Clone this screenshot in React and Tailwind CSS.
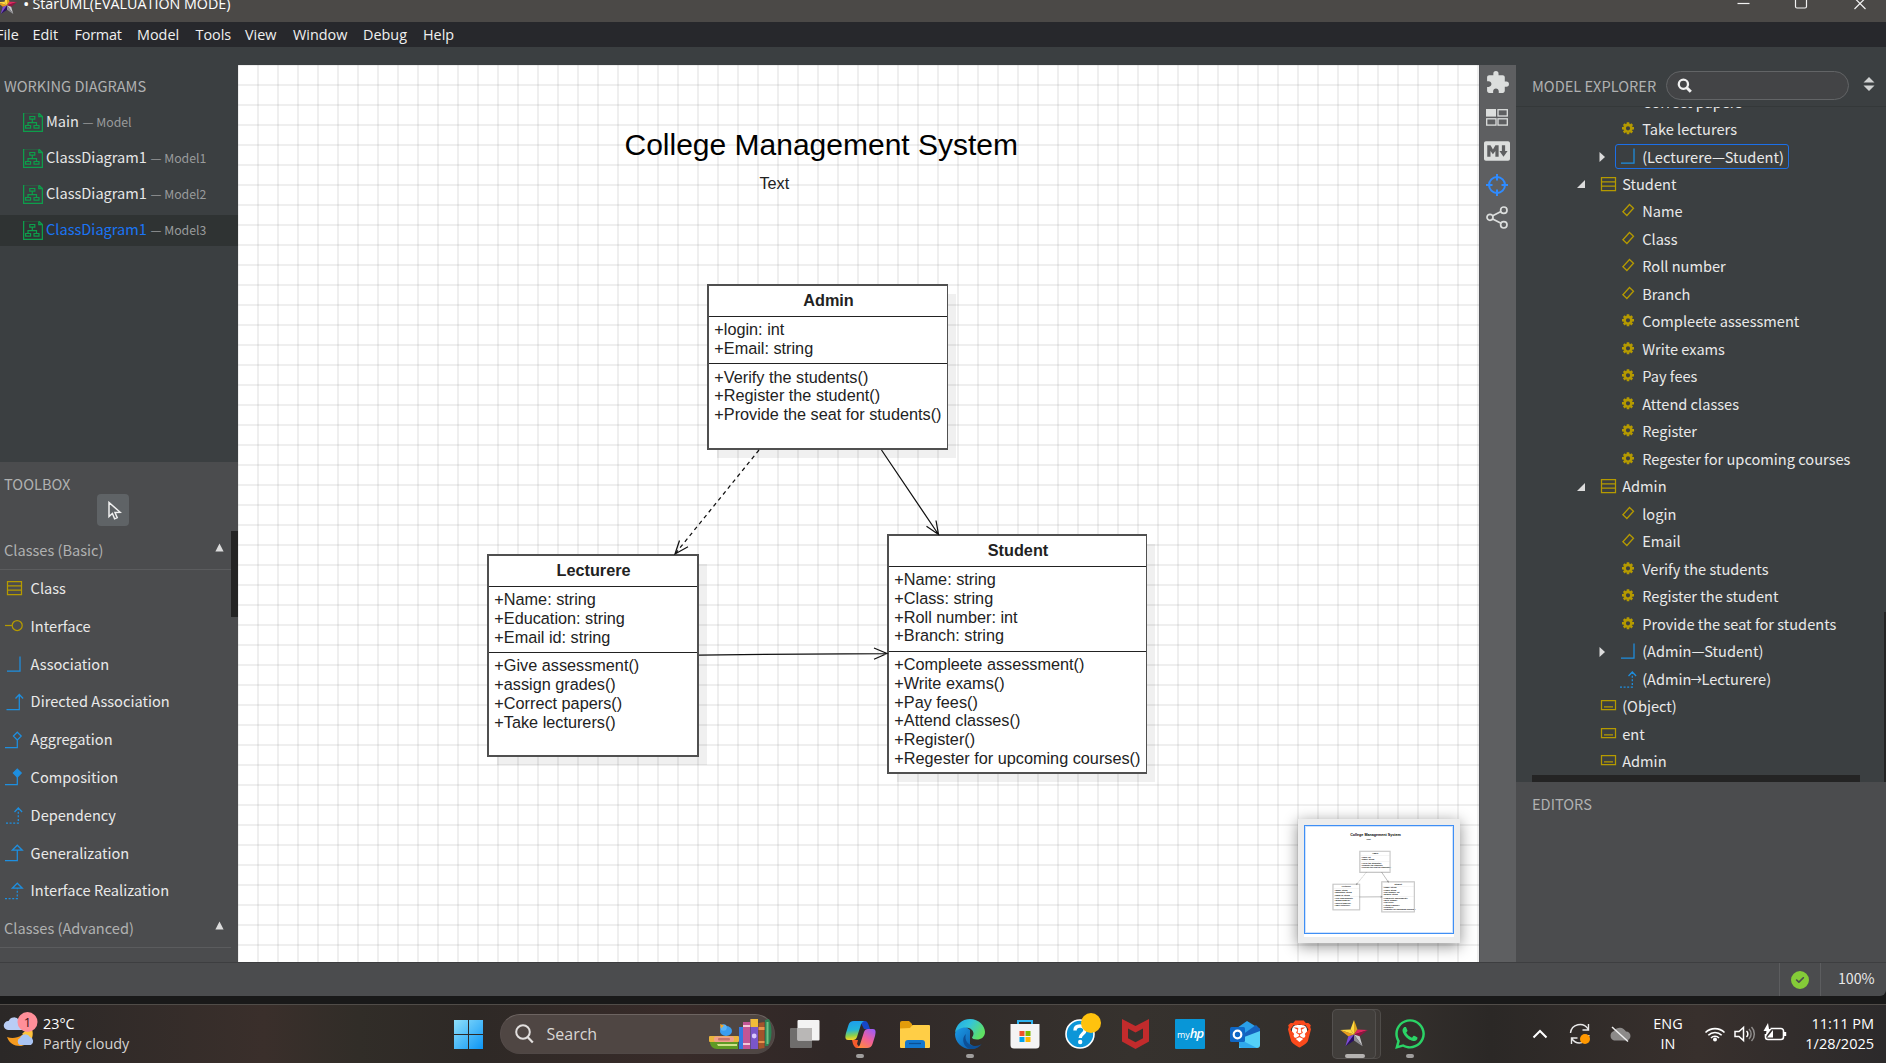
import { FaWhatsapp } from 'react-icons/fa';
import { FaCircleCheck } from 'react-icons/fa6';
import { IoLogoMarkdown } from 'react-icons/io5';
import { MdExtension } from 'react-icons/md';
import { SiBrave } from 'react-icons/si';

const GOLD = '#b59a00';
const BLUE = '#1e8fe0';

/* ---------- UML glyphs ---------- */

function Glyph({ kind }) {
  const p = { fill: 'none', strokeWidth: 1.25 };
  const shapes = {
    class: <path {...p} stroke={GOLD} d="M2.5 1.5h14v13h-14zM2.5 5.8h14M2.5 10.2h14" />,
    object: <path {...p} stroke={GOLD} d="M2.5 2.5h14v9h-14zM5 8.8h9" />,
    attr: <path {...p} stroke={GOLD} strokeWidth="1.3" d="M10.5 1.5l4 3.8-6.6 7.2-4-3.8z" />,
    op: (
      <g fill="none" stroke={GOLD} transform="translate(1 -.7)">
        <circle cx="8" cy="8" r="3.4" strokeWidth="2.6" />
        <path strokeWidth="2.6" d="M8 2v2M8 12v2M2 8h2M12 8h2M3.8 3.8l1.4 1.4M10.8 10.8l1.4 1.4M12.2 3.8l-1.4 1.4M5.2 10.8l-1.4 1.4" />
      </g>
    ),
    interface: (
      <g {...p} stroke={GOLD}>
        <circle cx="12.2" cy="7.5" r="5" />
        <path d="M0 7.5h7" />
      </g>
    ),
    assoc: <path {...p} stroke={BLUE} d="M2 15.2h13V.5" />,
    directed: <path {...p} stroke={BLUE} d="M1.5 15.5h12.8V.5M10.5 4.5l3.8-4 3.8 4" />,
    aggregation: <path {...p} stroke={BLUE} d="M0 15.5h12.3V8M12.3.2l3.9 3.9-3.9 3.9-3.9-3.9z" />,
    composition: (
      <g {...p} stroke={BLUE}>
        <path d="M0 15.5h12.3V8" />
        <path fill={BLUE} d="M12.3.2l3.9 3.9-3.9 3.9-3.9-3.9z" />
      </g>
    ),
    dependency: (
      <g {...p} stroke={BLUE}>
        <path strokeDasharray="2 1.6" d="M1 16h12.3V2" />
        <path d="M9.5 5l3.8-4 3.8 4" />
      </g>
    ),
    generalization: <path {...p} stroke={BLUE} d="M0 15.5h12.3V5.3M12.3.2l5 5h-10z" />,
    realization: (
      <g {...p} stroke={BLUE}>
        <path strokeDasharray="2 1.6" d="M0 15.5h12.3V5.3" />
        <path d="M12.3.2l5 5h-10z" />
      </g>
    ),
  };
  return (
    <svg width="18" height="17" viewBox="0 0 18 17" className="shrink-0 overflow-visible">
      {shapes[kind]}
    </svg>
  );
}

function DiagramIcon() {
  return (
    <svg width="20" height="19" viewBox="0 0 20 19" className="shrink-0" fill="none" stroke="#0d9e4b">
      <path strokeWidth="1.3" d="M.6 0v18.3h18.8V3.5M15.8.3v3.2h3.6L16 .3" />
      <path strokeWidth=".6" opacity=".5" d="M1 .4h14" />
      <path strokeWidth="1.2" d="M6.8 3.5h5v2.6h-5zM9.3 6.1v3.6M5 12.5V9.7h8.5v2.8M2.6 12.5h5v2.6h-5zM11 12.5h5v2.6h-5z" />
    </svg>
  );
}

function StarLogo({ size }) {
  const fills = ['#d9a21c', '#e0265f', '#8f1440', '#c9c9cc', '#8d8d92', '#2a0f63', '#7d4ad8', '#e89a1c', '#ffd83f', '#ffd83f'];
  const pts = Array.from({ length: 10 }, (_, i) => {
    const a = (-90 + i * 36) * (Math.PI / 180);
    const r = i % 2 ? 6.4 : 15.5;
    return [16 + r * Math.cos(a), 16.5 + r * Math.sin(a)];
  });
  return (
    <svg width={size} height={size} viewBox="0 0 32 32" className="shrink-0">
      {pts.map((q, i) => {
        const n = pts[(i + 1) % 10];
        return <polygon key={i} fill={fills[i]} points={`16,16.5 ${q[0]},${q[1]} ${n[0]},${n[1]}`} />;
      })}
    </svg>
  );
}

/* ---------- Top bars ---------- */

function TitleBar() {
  return (
    <div className="flex h-[22px] justify-between overflow-hidden bg-[#4b4947] text-white">
      <div className="-mt-[9px] flex h-[26px] items-center font-['Open_Sans',sans-serif] text-[14.3px] leading-[26px]">
        <div className="-ml-[4px] mr-[5px] mt-[1px]"><StarLogo size={22} /></div>
        <span className="mr-[4px] text-[17px]">•</span>
        <span className="-ml-[1px]">StarUML(EVALUATION MODE)</span>
      </div>
      <svg width="160" height="22" viewBox="0 0 160 22" fill="none" stroke="#f2f2f2" strokeWidth="1.2">
        <path d="M11.5 3.5h12" />
        <rect x="69.5" y="-3" width="11" height="11" rx="1.5" />
        <path d="M128.5-2l11 11M139.5-2l-11 11" />
      </svg>
    </div>
  );
}

function MenuBar() {
  return (
    <div className="flex h-[25px] overflow-hidden bg-[#27282c] font-['Open_Sans',sans-serif] text-[14.4px] leading-[25px] text-[#f0f0f0]">
      <span className="-ml-[4px] w-[36.5px]">File</span>
      <span className="w-[42px]">Edit</span>
      <span className="w-[62.5px] tracking-[-0.2px]">Format</span>
      <span className="w-[58.5px]">Model</span>
      <span className="w-[49.5px]">Tools</span>
      <span className="w-[48px]">View</span>
      <span className="w-[70px]">Window</span>
      <span className="w-[60px]">Debug</span>
      <span>Help</span>
    </div>
  );
}

/* ---------- Left column ---------- */

const DIAGRAMS = [
  { name: 'Main', model: 'Model' },
  { name: 'ClassDiagram1', model: 'Model1' },
  { name: 'ClassDiagram1', model: 'Model2' },
  { name: 'ClassDiagram1', model: 'Model3', active: true },
];

const TOOLS = [
  ['class', 'Class'],
  ['interface', 'Interface'],
  ['assoc', 'Association'],
  ['directed', 'Directed Association'],
  ['aggregation', 'Aggregation'],
  ['composition', 'Composition'],
  ['dependency', 'Dependency'],
  ['generalization', 'Generalization'],
  ['realization', 'Interface Realization'],
];

function GroupHeader({ label }) {
  return (
    <div className="flex h-[38px] items-center justify-between border-b border-[#5b5c5e] pl-[4px] pr-[7.5px] text-[#b0b1b1]">
      <span className="-mt-[1px] leading-[24px]">{label}</span>
      <svg width="9" height="9" viewBox="0 0 9 9" className="-mt-[7px]"><path fill="#dcdcdc" d="M4.5.5L8.6 8.5H.4z" /></svg>
    </div>
  );
}

function LeftColumn() {
  return (
    <div className="flex w-[238px] shrink-0 flex-col bg-[#3b3f41] text-[14.6px]">
      <div className="h-[397px]">
        <div className="h-[39px] pl-[4px] pt-[9px] leading-[24px] text-[#b0b1b1]">WORKING DIAGRAMS</div>
        {DIAGRAMS.map((d, i) => (
          <div key={i} className="flex h-[36px] items-center">
            <div className={d.active ? 'flex h-[31px] w-full items-center bg-[#2f3333] pl-[23px]' : 'flex h-[31px] w-full items-center pl-[23px]'}>
              <DiagramIcon />
              <span className={d.active ? '-mt-[2px] ml-[3px] leading-[24px] text-[#1a75f5]' : '-mt-[2px] ml-[3px] leading-[24px] text-[#e6e6e6]'}>{d.name}</span>
              <span className="ml-[3.5px] text-[12.3px] leading-[24px] text-[#999b9c]">— {d.model}</span>
            </div>
          </div>
        ))}
      </div>
      <div className="relative h-[500px] overflow-hidden bg-[#4b4c4e]">
        <div className="h-[32px] pl-[4px] pt-[10px] leading-[24px] text-[#b0b1b1]">TOOLBOX</div>
        <div className="ml-[97px] flex h-[32px] w-[32px] items-center justify-center rounded-[4px] bg-[#5f6366]">
          <svg width="14" height="19" viewBox="0 0 14 19" fill="none" stroke="#f0f0f0" strokeWidth="1.5" className="ml-[3px]">
            <path d="M1 1.5v14l3.4-3 2.2 5.3 2.6-1.1L7 11.5l5.2-.2z" />
          </svg>
        </div>
        <div className="mt-[6px] w-[231px]">
          <GroupHeader label="Classes (Basic)" />
          {TOOLS.map(([k, label]) => (
            <div key={k} className="flex h-[37.8px] items-center pl-[5px] text-[#e9e9e9]">
              <Glyph kind={k} />
              <span className="-mt-[1.8px] ml-[7.6px] leading-[24px]">{label}</span>
            </div>
          ))}
          <GroupHeader label="Classes (Advanced)" />
        </div>
        <div className="absolute right-0 top-[69px] h-[86px] w-[7px] bg-[#242424]" />
      </div>
    </div>
  );
}

/* ---------- Canvas ---------- */

const CLASSES = [
  {
    name: 'Admin', box: 'left-[469px] top-[219px] w-[241px] h-[166px] border-r', mid: 'h-[47px]', ops: 'pt-[3.5px]',
    attrs: ['+login: int', '+Email: string'],
    methods: ['+Verify the students()', '+Register the student()', '+Provide the seat for students()'],
  },
  {
    name: 'Lecturere', box: 'left-[249px] top-[489px] w-[212px] h-[203px] border-r-2', mid: 'h-[66px]', ops: 'pt-[3.3px]',
    attrs: ['+Name: string', '+Education: string', '+Email id: string'],
    methods: ['+Give assessment()', '+assign grades()', '+Correct papers()', '+Take lecturers()'],
  },
  {
    name: 'Student', box: 'left-[649px] top-[469px] w-[260px] h-[240px] border-r', mid: 'h-[85px]', ops: 'pt-[3.2px]',
    attrs: ['+Name: string', '+Class: string', '+Roll number: int', '+Branch: string'],
    methods: ['+Compleete assessment()', '+Write exams()', '+Pay fees()', '+Attend classes()', '+Register()', '+Regester for upcoming courses()'],
  },
];

function ClassBox({ c, mini }) {
  const line = mini ? 'border-[#aaa]' : 'border-[#222]';
  return (
    <div className={`absolute border-l-2 border-t-2 border-b-2 bg-white ${c.box} ${mini ? 'border-[#bbb] outline-8 outline-[#c4c4c4]' : 'border-[#505050] shadow-[9px_9px_0_-1px_rgba(0,0,0,0.06)]'}`}>
      <div className={`h-[31px] border-b pl-px text-center font-bold leading-[28px] ${line}`}>{c.name}</div>
      <div className={`border-b pl-[5.3px] pt-[3px] leading-[18.75px] ${line} ${c.mid}`}>
        {c.attrs.map((a) => <div key={a} className="whitespace-nowrap">{a}</div>)}
      </div>
      <div className={`pl-[5.3px] leading-[18.75px] ${c.ops}`}>
        {c.methods.map((m) => <div key={m} className="whitespace-nowrap">{m}</div>)}
      </div>
    </div>
  );
}

function Diagram({ mini }) {
  return (
    <div className={`font-['Liberation_Sans',Arial,sans-serif] text-[16.25px] ${mini ? 'font-bold text-black' : 'text-[#222]'}`}>
      <div className="absolute left-[386.5px] top-[62px] whitespace-nowrap text-[30px] leading-[36px] text-black">College Management System</div>
      <div className="absolute left-[521.4px] top-[109px] leading-[19px]">Text</div>
      {CLASSES.map((c) => <ClassBox key={c.name} c={c} mini={mini} />)}
      <svg className="absolute left-0 top-0" width="1241" height="897" fill="none" stroke={mini ? '#777' : '#111'} strokeWidth={mini ? 4 : 1.25}>
        <path strokeDasharray="4 3.6" d="M521 385L437 489" />
        <path d="M441.5 475.5L437 489l13-7.3" />
        <path d="M643.5 385l57 84.5M698 455.5l2.5 14-12-8.2" />
        <path d="M461 590l188-1.5M636 583l13 5.5-13 5.7" />
      </svg>
    </div>
  );
}

function Canvas() {
  return (
    <div className="relative w-[1241px] shrink-0 overflow-hidden bg-white bg-[linear-gradient(to_right,rgba(0,0,0,0.062)_2px,transparent_2px),linear-gradient(to_bottom,rgba(0,0,0,0.062)_2px,transparent_2px)] bg-[length:20px_20px] bg-[position:19px_19px]">
      <Diagram />
      <div className="absolute left-[1060px] top-[754px] h-[124px] w-[162px] bg-[#ededed] p-[6px] shadow-[0_3px_14px_rgba(0,0,0,0.45)]">
        <div className="relative h-[112px] w-[150px] overflow-hidden bg-white">
          <div className="absolute -left-px top-0 h-[897px] w-[1241px] origin-top-left scale-[0.122]">
            <Diagram mini />
          </div>
          <div className="absolute left-0 top-0 h-[109px] w-[150px] border border-[#3f8ff5] ring-1 ring-inset ring-[#cfe2fc]" />
        </div>
      </div>
    </div>
  );
}

/* ---------- Right side ---------- */

function ToolStrip() {
  return (
    <div className="flex w-[37px] shrink-0 flex-col items-center border-l border-[#55565a] bg-[#5e5f61] pr-[2px] pt-[5px] text-[#dcdedd]">
      <MdExtension className="size-[25px]" />
      <svg width="22" height="17" viewBox="0 0 22 17" fill="none" stroke="#dcdedd" strokeWidth="1.3" className="mt-[14px]">
        <rect x="0" y="0" width="10" height="7.6" fill="#dcdedd" stroke="none" />
        <rect x="12" y=".7" width="9.3" height="6.3" />
        <rect x=".7" y="9.8" width="9.3" height="6.3" />
        <rect x="12" y="9.8" width="9.3" height="6.3" />
      </svg>
      <IoLogoMarkdown className="mt-[12px] size-[26px]" />
      <svg width="22" height="22" viewBox="0 0 22 22" fill="none" stroke="#2f8bff" strokeWidth="2" className="mt-[10px]">
        <circle cx="11" cy="11" r="8" />
        <path d="M11 0v6.5M11 15.5V22M0 11h6.5M15.5 11H22" />
      </svg>
      <svg width="22" height="23" viewBox="0 0 22 23" fill="none" stroke="#dcdedd" strokeWidth="1.7" className="mt-[10px]">
        <circle cx="4" cy="11.3" r="3" />
        <circle cx="17.8" cy="4.2" r="3.2" />
        <circle cx="17.8" cy="18.8" r="3.2" />
        <path d="M6.7 9.8l8.3-4.2M6.7 12.9l8.3 4.3" />
      </svg>
    </div>
  );
}

const TREE = [
  { l: 3, k: 'op', t: 'Correct papers', low: true },
  { l: 3, k: 'op', t: 'Take lecturers' },
  { l: 3, k: 'assoc', t: '(Lecturere—Student)', a: 'closed', sel: true, low: true },
  { l: 2, k: 'class', t: 'Student', a: 'open' },
  { l: 3, k: 'attr', t: 'Name' },
  { l: 3, k: 'attr', t: 'Class' },
  { l: 3, k: 'attr', t: 'Roll number' },
  { l: 3, k: 'attr', t: 'Branch' },
  { l: 3, k: 'op', t: 'Compleete assessment' },
  { l: 3, k: 'op', t: 'Write exams' },
  { l: 3, k: 'op', t: 'Pay fees' },
  { l: 3, k: 'op', t: 'Attend classes' },
  { l: 3, k: 'op', t: 'Register' },
  { l: 3, k: 'op', t: 'Regester for upcoming courses' },
  { l: 2, k: 'class', t: 'Admin', a: 'open' },
  { l: 3, k: 'attr', t: 'login' },
  { l: 3, k: 'attr', t: 'Email' },
  { l: 3, k: 'op', t: 'Verify the students' },
  { l: 3, k: 'op', t: 'Register the student' },
  { l: 3, k: 'op', t: 'Provide the seat for students' },
  { l: 3, k: 'assoc', t: '(Admin—Student)', a: 'closed' },
  { l: 3, k: 'dependency', t: <>(Admin<span className="mx-[-2.3px] inline-block scale-x-75">→</span>Lecturere)</> },
  { l: 2, k: 'object', t: '(Object)' },
  { l: 2, k: 'object', t: 'ent' },
  { l: 2, k: 'object', t: 'Admin' },
];

function TreeRow({ r }) {
  return (
    <div className={r.l === 2 ? 'flex h-[27.5px] items-center pl-[58px]' : 'flex h-[27.5px] items-center pl-[79px]'}>
      <svg width="14" height="14" viewBox="0 0 14 14" className="shrink-0" fill="#dcdcdc">
        {r.a === 'closed' && <path d="M4.5 2l5.5 5-5.5 5z" />}
        {r.a === 'open' && <path d="M11 3v8H3z" />}
      </svg>
      <div className={`flex h-[25px] items-center rounded-[3px] border pl-[3px] pr-[4px] ${r.l === 2 ? 'ml-[7px]' : 'ml-[6px]'} ${r.sel ? 'border-[#1b6fe8]' : 'border-transparent'}`}>
        <Glyph kind={r.k} />
        <span className={`ml-[5.2px] whitespace-nowrap leading-[24px] ${r.low ? 'mt-[1px]' : '-mt-px'}`}>{r.t}</span>
      </div>
    </div>
  );
}

function RightPanel() {
  return (
    <div className="flex flex-1 flex-col bg-[#3b3f41] text-[14.6px] text-[#e9e9e9]">
      <div className="flex h-[42px] items-center border-b border-[#343839] pl-[16px]">
        <span className="w-[134px] leading-[24px] text-[#b0b1b1]">MODEL EXPLORER</span>
        <div className="flex h-[29px] w-[183px] items-center rounded-full border border-[#626466] bg-[#434446] pl-[9.5px]">
          <svg width="16" height="16" viewBox="0 0 16 16" fill="none" stroke="#f0f0f0">
            <circle cx="6.4" cy="6.2" r="4.6" strokeWidth="2.3" />
            <path strokeWidth="3" d="M9.8 9.8l4 4" />
          </svg>
        </div>
        <svg width="12" height="14" viewBox="0 0 12 14" fill="#d0d2d2" className="-mt-[3px] ml-[13.5px]">
          <path d="M6 0l5.5 5.5H.5zM6 14l5.5-5.5H.5z" />
        </svg>
      </div>
      <div className="relative h-[675px] overflow-hidden">
        <div className="-mt-[19px]">
          {TREE.map((r, i) => <TreeRow key={i} r={r} />)}
        </div>
        <div className="absolute bottom-0 left-[16px] h-[7px] w-[328px] bg-[#242424]" />
        <div className="absolute bottom-0 right-0 h-[170px] w-[2px] bg-[#242424]" />
      </div>
      <div className="flex-1 bg-[#4b4c4e] pl-[16px] pt-[10px] leading-[24px] text-[#b0b1b1]">EDITORS</div>
    </div>
  );
}

function StatusBar() {
  return (
    <div className="flex h-[34px] justify-end rounded-br-[6px] border-t border-[#3d3e40] bg-[#4b4c4e] text-[14.2px] text-[#e9e9e9]">
      <div className="flex w-[42px] items-center justify-center border-x border-[#5c5d5f]">
        <FaCircleCheck className="size-[18px] text-[#84cb38]" />
      </div>
      <div className="w-[65px] pl-[17px] leading-[31px]">100%</div>
    </div>
  );
}

/* ---------- Taskbar ---------- */

function Cell({ children, bar, active }) {
  return (
    <div className="relative flex h-[50px] w-[55px] shrink-0 items-center justify-center">
      {active && <div className="absolute left-[9px] top-0 h-[50px] w-[44px] rounded-[5px] border border-white/10 bg-white/5" />}
      {active && <div className="absolute left-[4px] top-0 h-[50px] w-[44px] rounded-[5px] border border-white/10 bg-[#413e3b]" />}
      <div className={active ? 'relative -left-px' : 'relative'}>{children}</div>
      {bar === 'short' && <div className="absolute bottom-[1px] h-[4px] w-[8px] rounded-full bg-[#a09e9d]" />}
      {bar === 'long' && <div className="absolute bottom-[1px] h-[4px] w-[20px] rounded-full bg-[#b5b3b1]" />}
    </div>
  );
}

function Weather() {
  return (
    <svg width="40" height="38" viewBox="0 0 40 38" className="ml-[2px] mt-[7px] shrink-0">
      <path fill="#b9cdf5" d="M6 18a4.5 4.5 0 0 1 .5-9A6 6 0 0 1 17 8a5 5 0 0 1 4 10z" />
      <path fill="#f59a1e" d="M5 25c8 3 17-1 22-9 5 9-1 18-9 18C12 34 7 31 5 25z" />
      <path fill="#ffc23d" d="M20 22l8-8c4 5 3 11 1 14z" />
      <path fill="#a9c4f3" d="M18 33a3.8 3.8 0 0 1 0-7 5.6 5.6 0 0 1 10-1 4.4 4.4 0 0 1 1 8z" />
      <circle cx="25.5" cy="10" r="10" fill="#ff8f99" />
      <text x="25.5" y="15" textAnchor="middle" className="font-['Open_Sans',sans-serif] text-[13px]" fill="#3b1115">1</text>
    </svg>
  );
}

function Books() {
  return (
    <svg width="64" height="30" viewBox="0 0 64 30" className="shrink-0">
      <path fill="#5f9a25" d="M1 23h28v7H8c-4 0-7-3-7-7z" />
      <path fill="#cfe08a" d="M8 25h20v2H9z" />
      <rect x="0" y="17" width="30" height="6" rx="1" fill="#e9b43f" />
      <rect x="5" y="17.5" width="20" height="5.5" rx="2" fill="#f0a08c" />
      <rect x="9" y="19" width="12" height="2.5" rx="1" fill="#c4736b" />
      <ellipse cx="17" cy="12" rx="6" ry="5" fill="#3a9df0" />
      <circle cx="14.5" cy="8.5" r="3.3" fill="#59b4f8" />
      <path fill="#f4a52a" d="M11 5l4 1.5-3 3z" />
      <rect x="30" y="8" width="4" height="22" fill="#3578e0" />
      <rect x="34" y="3" width="7" height="27" fill="#c25595" />
      <path fill="#f3c8d8" d="M34 6h7v2h-7zM34 24h7v2h-7z" />
      <rect x="41.5" y="0" width="7.5" height="30" fill="#7a56c9" />
      <rect x="41.5" y="0" width="7.5" height="8" fill="#f1bd3a" />
      <circle cx="45.2" cy="17" r="2.4" fill="#d9c8ff" />
      <path fill="#a3542a" d="M49.5 4l6-1V29l-6 1z" />
      <path fill="#e8934c" d="M49.5 8h6v3h-6zM49.5 22h6v2h-6z" />
      <path fill="#2c8052" d="M56 1l4-1c3 7 4 19-1 27h-3z" />
      <path fill="#6fbf86" d="M57.5 3h2v22h-2z" />
    </svg>
  );
}

function Copilot() {
  return (
    <svg width="31" height="29" viewBox="0 0 31 29">
      <defs>
        <linearGradient id="cpA" x1="0" y1="0" x2="0.1" y2="1"><stop offset="0" stopColor="#1c9bf0" /><stop offset=".5" stopColor="#23b4d8" /><stop offset=".8" stopColor="#8fd14a" /><stop offset="1" stopColor="#f5d328" /></linearGradient>
        <linearGradient id="cpB" x1="0.8" y1="0" x2="0.2" y2="1"><stop offset="0" stopColor="#a15cf5" /><stop offset=".5" stopColor="#f0609a" /><stop offset="1" stopColor="#ff8a3c" /></linearGradient>
      </defs>
      <path fill="#1647c8" d="M15 1h5c2 0 3 2 4 5l1 3h-6z" />
      <path fill="#f35a2c" d="M7 20h6l-1 4 3 4h-3c-2 0-3-2-4-4z" />
      <path fill="url(#cpA)" d="M9 1h10c-2 1-3 3-3.5 5L12 17c-.7 2-2 3-4 3H3c-3 0-3-3-2-7l2.5-8C4.3 2.5 6 1 9 1z" />
      <path fill="url(#cpB)" d="M22 28H12c2-1 3-3 3.5-5L19 12c.7-2 2-3 4-3h5c3 0 3 3 2 7l-2.5 8c-.8 2.5-2.5 4-5.5 4z" />
    </svg>
  );
}

function Edge() {
  return (
    <svg width="30" height="30" viewBox="0 0 30 30">
      <defs>
        <linearGradient id="edA" x1="0" y1="0" x2="1" y2=".5"><stop offset="0" stopColor="#1ea7e8" /><stop offset=".5" stopColor="#35c5d8" /><stop offset="1" stopColor="#5fe063" /></linearGradient>
        <linearGradient id="edB" x1="0" y1="0" x2="1" y2="1"><stop offset="0" stopColor="#1c9ce8" /><stop offset="1" stopColor="#0b58a8" /></linearGradient>
      </defs>
      <path fill="url(#edB)" d="M0 15c1-5 6-8 11-7l4 3v14l6 4c-2 1-4 1-6 1C6.7 30 0 23 0 15z" />
      <path fill="url(#edA)" d="M0 14C.7 6 7 0 15 0c9 0 15 7 15 13 0 5-4 7.5-8 7.5-3 0-5-1-5-2 0-.8 1.5-1.5 1.5-4 0-3-3-6-8-6C5.5 8.5 1 11 0 14z" />
      <path fill="#0d4f96" d="M11 15c-2 6 2 12 9 12 3 0 6-1 7-2.5C24 29 19 30.5 15 30 8 28 6 19 11 15z" />
    </svg>
  );
}

function TaskIcons() {
  return (
    <div className="ml-[2.5px] flex">
      <Cell>
        <svg width="30" height="28" viewBox="0 0 30 28"><rect x="0" y="8" width="22" height="20" rx="1" fill="#6f6d6c" /><rect x="7.5" y="0" width="22" height="20.5" rx="1" fill="#f3f3f3" /><path fill="#b9b7b6" d="M7.5 8H22v12.5H7.5z" /></svg>
      </Cell>
      <Cell bar="short"><Copilot /></Cell>
      <Cell>
        <svg width="30" height="27" viewBox="0 0 30 27"><path fill="#e29c0a" d="M0 2a2 2 0 0 1 2-2h7l3 3v5H0z" /><path fill="#ffce46" d="M0 7.5L10 7l2.5-3H29a1 1 0 0 1 1 1v21a1 1 0 0 1-1 1H1a1 1 0 0 1-1-1z" /><path fill="#1277cf" d="M5 27v-5a3 3 0 0 1 3-3h14a3 3 0 0 1 3 3v5z" /><path stroke="#0a4f94" strokeWidth="1.3" d="M9 22.5h12" /></svg>
      </Cell>
      <Cell bar="short"><Edge /></Cell>
      <Cell>
        <svg width="30" height="30" viewBox="0 0 30 30"><path fill="none" stroke="#2fb4ef" strokeWidth="2" d="M8 6V2h14v4" /><path fill="#f4f4f4" d="M.5 5h29v21a3.5 3.5 0 0 1-3.5 3.5H4A3.5 3.5 0 0 1 .5 26z" /><path fill="#f0512b" d="M9.5 12h5v5h-5z" /><path fill="#7fba00" d="M15.5 12h5v5h-5z" /><path fill="#00a3ee" d="M9.5 18h5v5h-5z" /><path fill="#ffb800" d="M15.5 18h5v5h-5z" /></svg>
      </Cell>
      <Cell>
        <svg width="30" height="30" viewBox="0 0 30 30" className="overflow-visible"><circle cx="15" cy="15" r="14" fill="#0c96d8" stroke="#fff" strokeWidth="1.6" /><path fill="none" stroke="#fff" strokeWidth="3.4" d="M10 11.5c0-3 2-4.5 5-4.5s5 1.7 5 4.3c0 3.2-4.8 3.7-4.8 7.7" /><circle cx="15.2" cy="23" r="2.2" fill="#fff" /><circle cx="26" cy="4" r="10" fill="#ffc20e" /></svg>
      </Cell>
      <Cell>
        <svg width="27" height="30" viewBox="0 0 27 30"><path fill="#c22b2c" d="M0 0l13.5 7L27 0v22.5L13.5 30 0 22.5zM6 9.5v9.7l7.5 4 7.5-4V9.5l-7.5 4z" fillRule="evenodd" /></svg>
      </Cell>
      <Cell>
        <div className="flex size-[30px] items-center justify-center rounded-[1px] bg-[#0896d7] font-['Open_Sans',sans-serif] leading-none text-white">
          <span className="text-[9px]">my</span><span className="-mt-px text-[13px] font-semibold italic tracking-[-1px]">hp</span>
        </div>
      </Cell>
      <Cell>
        <svg width="30" height="27" viewBox="0 0 30 27"><path fill="#2a9fe8" d="M4 9L17 0l13 8v6H4z" /><path fill="#1562be" d="M12 14L26 4l4 4v6l-12 6z" /><path fill="#54d0f7" d="M9 18l21-8v14a3 3 0 0 1-3 3H9z" /><path fill="#2fa9ec" d="M9 18l18 9H12a3 3 0 0 1-3-3z" /><rect x="0" y="6" width="15" height="15" rx="1.5" fill="#0f67c5" /><circle cx="7.5" cy="13.5" r="3.8" fill="none" stroke="#fff" strokeWidth="2.2" /></svg>
      </Cell>
      <Cell>
        <div className="relative -left-[1px] flex h-[30px] w-[27px] items-center justify-center">
          <div className="absolute left-[6px] top-[6px] h-[18px] w-[15px] rounded-[5px] bg-white" />
          <SiBrave className="relative size-[30px] text-[#fb4a1c]" />
        </div>
      </Cell>
      <Cell bar="long" active><StarLogo size={30} /></Cell>
      <Cell bar="short"><FaWhatsapp className="size-[34px] text-[#2bd366]" /></Cell>
    </div>
  );
}

function Tray() {
  return (
    <div className="ml-[82.5px] flex flex-1 items-center text-white">
      <svg width="40" height="30" viewBox="0 0 40 30" fill="none" stroke="#fff" strokeWidth="2"><path d="M13.5 18.5l6.5-6.5 6.5 6.5" /></svg>
      <svg width="40" height="30" viewBox="0 0 40 30" fill="none" stroke="#e8e8e8" strokeWidth="1.4"><path d="M10.5 14a9.5 9.5 0 0 1 17.5-4M28.5 5v6h-6M29 16a9.5 9.5 0 0 1-17 4M11.5 25v-6h6" /><circle cx="25" cy="20" r="5" fill="#ff9800" stroke="none" /></svg>
      <svg width="40" height="30" viewBox="0 0 40 30"><path fill="#8c8a89" d="M14 21.5a5 5 0 0 1 0-9.5 7 7 0 0 1 12 .5 4.5 4.5 0 0 1 0 9z" /><path stroke="#f0f0f0" strokeWidth="1.5" d="M12 8l16 14.5" /></svg>
      <div className="w-[56px] text-center text-[14.4px] leading-[20px]"><div>ENG</div><div>IN</div></div>
      <svg width="36" height="30" viewBox="0 0 36 30" fill="none" stroke="#fff" strokeWidth="1.6"><path d="M9.5 13.5a13.5 13.5 0 0 1 19 0M12.3 16.3a9.5 9.5 0 0 1 13.4 0M15 19a5.6 5.6 0 0 1 8 0" /><circle cx="19" cy="20.5" r="2" fill="#fff" stroke="none" /></svg>
      <svg width="30" height="30" viewBox="0 0 30 30" fill="none" stroke="#fff" strokeWidth="1.5"><path d="M3 12.5h4l4.5-4v13l-4.5-4H3z" /><path d="M14.5 12a4 4 0 0 1 0 6" /><path stroke="#8f8d8c" d="M17 10a7 7 0 0 1 0 10M19.5 8a10 10 0 0 1 0 14" /></svg>
      <svg width="30" height="30" viewBox="0 0 30 30" fill="none" stroke="#fff" strokeWidth="1.6"><path d="M8.5 9.5h10.5a2.5 2.5 0 0 1 2.5 2.5v6a2.5 2.5 0 0 1-2.5 2.5H6A2.5 2.5 0 0 1 3.5 18v-3" /><path strokeWidth="2.4" d="M23 13v4" /><path fill="#fff" stroke="none" d="M6 4L1.5 12h3l-1 6 6-8H7z" /><path fill="#fff" stroke="none" d="M5 18.5l6-7.5v7.5z" /></svg>
      <div className="ml-auto pr-[12px] text-right text-[14.5px] leading-[20px]"><div>11:11 PM</div><div>1/28/2025</div></div>
    </div>
  );
}

function Taskbar() {
  return (
    <div className="flex h-[59px] items-center border-t border-[#504c48] bg-[linear-gradient(to_right,#2b2827,#3a2f2b_14%,#312d28_19%,#2e2926_25%,#382b29_36%,#302827_44%,#36322e_60%,#322e2b_75%,#2b2826_79%,#38302d_90%,#2c2a2b)] font-['Open_Sans',sans-serif]">
      <div className="flex h-[58px] w-[454px] shrink-0 text-[14.4px] leading-[20px]">
        <Weather />
        <div className="ml-[1px] mt-[9px] text-white"><div>23°C</div><div className="text-[#d6d3d1]">Partly cloudy</div></div>
      </div>
      <svg width="29" height="29" viewBox="0 0 29 29" className="shrink-0">
        <defs><linearGradient id="win" x1="0" y1="0" x2="1" y2="1"><stop offset="0" stopColor="#8fe0fb" /><stop offset="1" stopColor="#0c95f5" /></linearGradient></defs>
        <path fill="url(#win)" d="M0 0h14v14H0zM15 0h14v14H15zM0 15h14v14H0zM15 15h14v14H15z" />
      </svg>
      <div className="ml-[17px] flex h-[40px] w-[275px] shrink-0 items-center rounded-full border border-t-[#6d6461] border-x-[#564d4b] border-b-[#504846] bg-[#4f4643] pl-[14px]">
        <svg width="19" height="20" viewBox="0 0 19 20" fill="none" stroke="#e2dfde"><circle cx="8" cy="8" r="6.8" strokeWidth="2" /><path strokeWidth="2.2" d="M12.8 13.2l5 5.3" /></svg>
        <span className="ml-[12.5px] mr-auto text-[16px] leading-[24px] text-[#d9d6d5]">Search</span>
        <div className="mr-[1px]"><Books /></div>
      </div>
      <TaskIcons />
      <Tray />
    </div>
  );
}

export default function App() {
  return (
    <div className="flex h-[1063px] w-[1886px] flex-col overflow-hidden bg-[#191919] font-['Noto_Sans_CJK_SC','Noto_Sans',sans-serif]">
      <TitleBar />
      <MenuBar />
      <div className="h-[18px] bg-[#3b3f41]" />
      <div className="flex h-[897px]">
        <LeftColumn />
        <Canvas />
        <ToolStrip />
        <RightPanel />
      </div>
      <StatusBar />
      <div className="h-[8px]" />
      <Taskbar />
    </div>
  );
}
